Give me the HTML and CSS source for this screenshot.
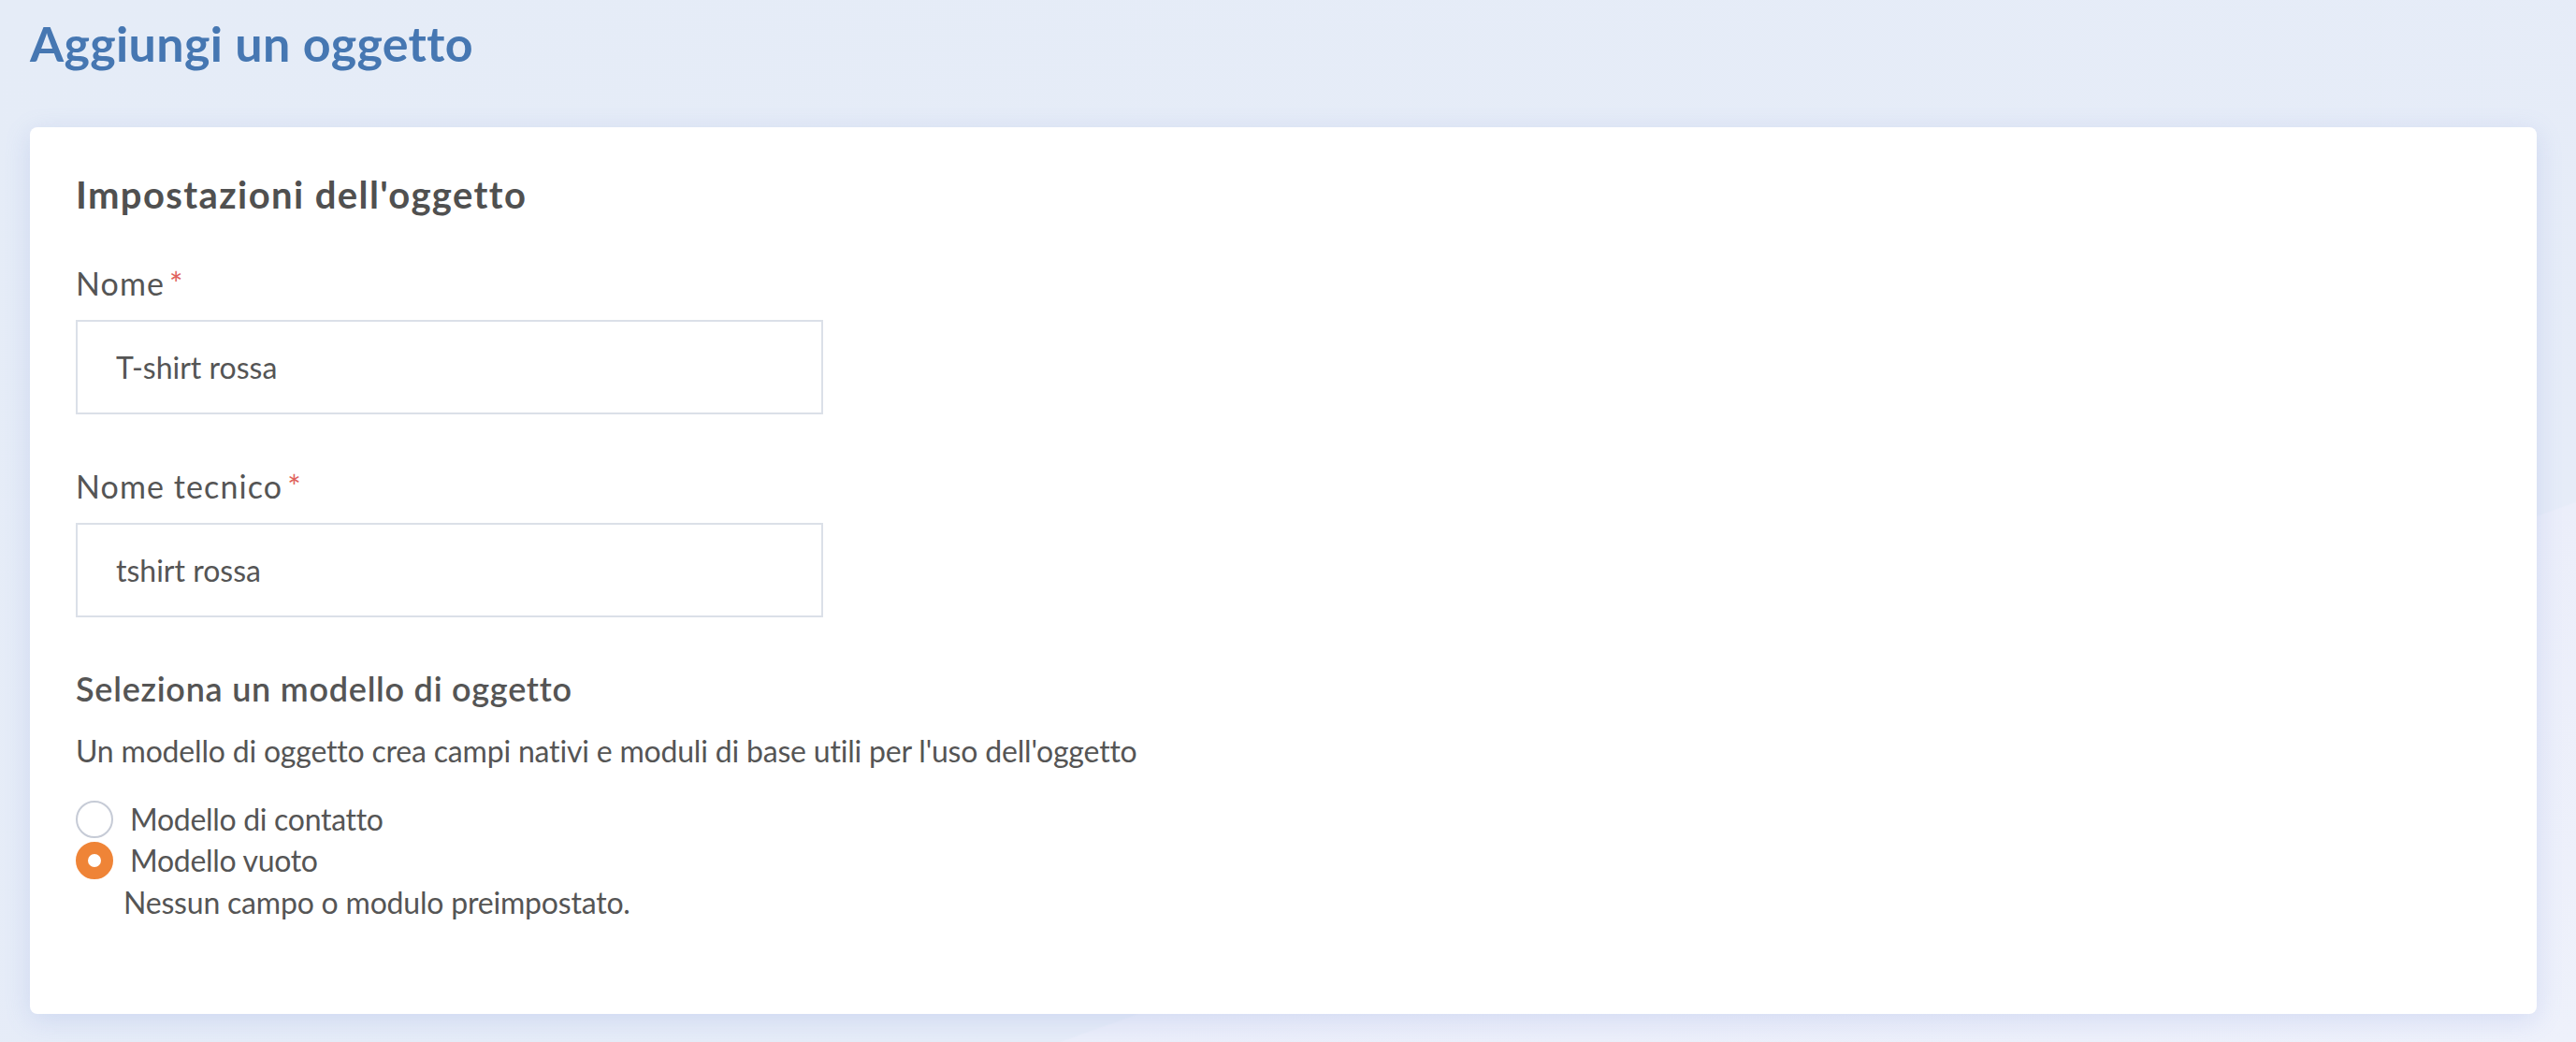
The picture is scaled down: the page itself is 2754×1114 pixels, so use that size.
FILE: index.html
```html
<!DOCTYPE html>
<html lang="it">
<head>
<meta charset="utf-8">
<title>Aggiungi un oggetto</title>
<link rel="stylesheet" href="styles.css">
</head>
<body>
<div class="page">
  <h1 class="page-title">Aggiungi un oggetto</h1>
  <section class="card">
    <h2 class="card-title">Impostazioni dell'oggetto</h2>
    <div class="field">
      <label class="field-label" for="nome">Nome<span class="req">*</span></label>
      <input class="text-input" id="nome" type="text" value="T-shirt rossa">
    </div>
    <div class="field field-second">
      <label class="field-label" for="tecnico">Nome tecnico<span class="req">*</span></label>
      <input class="text-input" id="tecnico" type="text" value="tshirt rossa">
    </div>
    <h3 class="section-title">Seleziona un modello di oggetto</h3>
    <p class="section-desc">Un modello di oggetto crea campi nativi e moduli di base utili per l'uso dell'oggetto</p>
    <div class="radio-group">
      <div class="radio-row">
        <span class="radio"></span>
        <span class="radio-label">Modello di contatto</span>
      </div>
      <div class="radio-row">
        <span class="radio radio-checked"></span>
        <span class="radio-label">Modello vuoto</span>
      </div>
      <p class="radio-help">Nessun campo o modulo preimpostato.</p>
    </div>
  </section>
</div>
</body>
</html>
```

FILE: styles.css
```css
* { box-sizing: border-box; }

html, body {
  margin: 0;
  padding: 0;
  height: 100%;
}

body {
  font-family: "Lato", "Noto Sans", sans-serif;
  color: #555555;
  background: linear-gradient(160.4deg, #e5ecf7 0%, #e6ecf8 72.4%, #ebeefa 72.5%, #eef1fb 100%);
  overflow: hidden;
}

.page {
  padding: 15px 42px 30px 32px;
}

.page-title {
  margin: 0;
  font-size: 52px;
  line-height: 62px;
  font-weight: 700;
  letter-spacing: 0.35px;
  color: #4677b2;
}

.card {
  margin-top: 59px;
  background: #ffffff;
  border-radius: 8px;
  box-shadow: 0 6px 28px rgba(110, 135, 215, 0.20);
  padding: 48px 49px 99px 49px;
  height: 948px;
}

.card-title {
  margin: 0;
  font-size: 40px;
  line-height: 48px;
  font-weight: 700;
  letter-spacing: 1.4px;
  color: #505050;
}

.field {
  margin-top: 51px;
  display: flex;
  flex-direction: column;
  align-items: flex-start;
}

.field-second {
  margin-top: 57px;
}

.field-label {
  font-size: 34px;
  line-height: 40px;
  font-weight: 400;
  letter-spacing: 1.1px;
  color: #555555;
  margin-bottom: 19px;
}

.req {
  color: #e0625c;
  margin-left: 5px;
}

.text-input {
  width: 799px;
  height: 101px;
  border: 2px solid #dbe0e8;
  border-radius: 0;
  padding: 0 41px;
  font-family: inherit;
  font-size: 32px;
  color: #555555;
  background: #ffffff;
  outline: none;
}

.section-title {
  margin: 54px 0 0 0;
  font-size: 36px;
  line-height: 44px;
  font-weight: 600;
  letter-spacing: 0.75px;
  color: #555555;
}

.section-desc {
  margin: 25px 0 0 0;
  font-size: 32px;
  line-height: 40px;
  letter-spacing: -0.19px;
  color: #555555;
}

.radio-group {
  margin-top: 31px;
}

.radio-row {
  display: flex;
  align-items: center;
  gap: 18px;
  height: 44px;
}

.radio {
  width: 40px;
  height: 40px;
  border-radius: 50%;
  border: 2px solid #c6cbd6;
  background: #ffffff;
  flex: none;
}

.radio-checked {
  border: 13px solid #ef8437;
  background: #ffffff;
}

.radio-label {
  font-size: 32px;
  line-height: 44px;
  letter-spacing: -0.3px;
}

.radio-help {
  margin: 3px 0 0 51px;
  font-size: 32px;
  line-height: 40px;
  letter-spacing: -0.2px;
}
```
